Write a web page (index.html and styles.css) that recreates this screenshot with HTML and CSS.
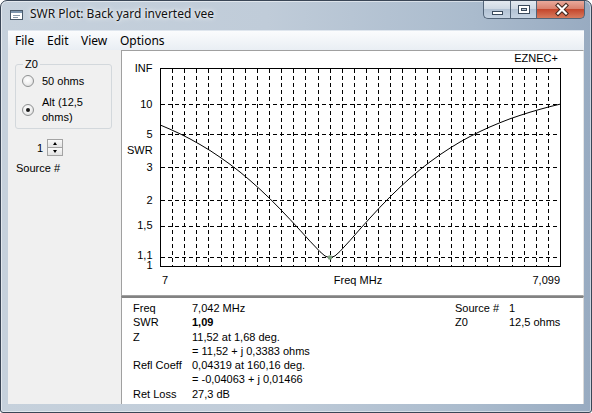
FILE: index.html
```html
<!DOCTYPE html>
<html>
<head>
<meta charset="utf-8">
<title>SWR Plot</title>
<link rel="stylesheet" href="styles.css">
</head>
<body>
<div class="window">
  <div class="titlebar">
    <svg class="app-icon" width="14" height="12" viewBox="0 0 14 12">
      <rect x="0.5" y="1.5" width="12" height="9" fill="#ffffff" stroke="#4a5a6a"/>
      <rect x="1" y="2" width="11" height="2" fill="#7d95ad"/>
      <path d="M3 6.5H10M3 8.5H8" stroke="#8a9aaa"/>
    </svg>
    <span class="title">SWR Plot: Back yard inverted vee</span>
    <div class="caption">
      <div class="cbtn cmin"><span class="glyph-min"></span></div>
      <div class="cbtn cmax"><span class="glyph-max"></span></div>
      <div class="cbtn cclose">
        <svg width="46" height="17" viewBox="0 0 46 17">
          <path d="M20 4.5L28 12.5M28 4.5L20 12.5" stroke="#40261e" stroke-width="4.2" stroke-linecap="square"/>
          <path d="M20 4.5L28 12.5M28 4.5L20 12.5" stroke="#ffffff" stroke-width="2.2" stroke-linecap="square"/>
        </svg>
      </div>
    </div>
  </div>
  <div class="menubar">
    <span>File</span><span>Edit</span><span>View</span><span>Options</span>
  </div>
  <div class="panes">
    <div class="left">
      <fieldset class="group">
        <legend>Z0</legend>
        <div class="radio r1"><span class="dot"></span><span>50 ohms</span></div>
        <div class="radio r2"><span class="dot on"></span><span>Alt (12,5<br>ohms)</span></div>
      </fieldset>
      <div class="spin">
        <span class="val">1</span>
        <div class="arrows"><span class="up"></span><span class="down"></span></div>
      </div>
      <div class="src">Source #</div>
    </div>
    <div class="right">
      <div class="plot">
        <svg class="chart" width="461" height="244" viewBox="122 51 461 244">
          <g class="grid">
            <path d="M172.5 69V266M184.5 69V266M196.5 69V266M208.5 69V266M221.5 69V266M233.5 69V266M245.5 69V266M257.5 69V266M269.5 69V266M281.5 69V266M293.5 69V266M305.5 69V266M318.5 69V266M330.5 69V266M342.5 69V266M354.5 69V266M366.5 69V266M378.5 69V266M390.5 69V266M402.5 69V266M415.5 69V266M427.5 69V266M439.5 69V266M451.5 69V266M463.5 69V266M475.5 69V266M487.5 69V266M499.5 69V266M512.5 69V266M524.5 69V266M536.5 69V266M548.5 69V266"/>
            <path d="M161 104.5H560M161 134.5H560M161 167.5H560M161 200.5H560M161 226.5H560M161 257.5H560"/>
          </g>
          <rect class="frame" x="160.5" y="68.5" width="400" height="198"/>
          <path class="curve" d="M160 124.9L170 129.2L180 133.8L190 138.9L200 144.5L210 150.5L220 157.2L230 164.3L240 172L250 180.4L260 189.3L270 198.8L280 208.9L290 219.4L300 230.2L310 241.2L320 251.7L325 256L330 257.9L335 255.9L340 251.4L350 240.5L360 229.1L370 218L380 207.2L390 196.9L400 187.2L410 178.1L420 169.7L430 161.9L440 154.7L450 148.1L460 142L470 136.5L480 131.5L490 126.9L500 122.7L510 118.8L520 115.4L530 112.2L540 109.3L550 106.6L560 104.2"/>
          <circle class="marker" cx="330" cy="257.5" r="2.3"/>
          <g class="axis">
            <text class="end" x="152.5" y="71.5">INF</text>
            <text class="end" x="152.5" y="107.5">10</text>
            <text class="end" x="152.5" y="137.5">5</text>
            <text x="127" y="153.5">SWR</text>
            <text class="end" x="152.5" y="170.5">3</text>
            <text class="end" x="152.5" y="203.5">2</text>
            <text class="end" x="152.5" y="229">1,5</text>
            <text class="end" x="152.5" y="259">1,1</text>
            <text class="end" x="152.5" y="269">1</text>
            <text x="162" y="284">7</text>
            <text class="mid" x="358" y="284">Freq MHz</text>
            <text class="end" x="560" y="284">7,099</text>
            <text class="end" x="558" y="61.5">EZNEC+</text>
          </g>
        </svg>
      </div>
      <div class="info">
        <div class="tbl tbl-left">
          <span>Freq</span><span>7,042 MHz</span>
          <span>SWR</span><span class="b">1,09</span>
          <span>Z</span><span>11,52 at 1,68 deg.</span>
          <span></span><span>= 11,52 + j 0,3383 ohms</span>
          <span>Refl Coeff</span><span>0,04319 at 160,16 deg.</span>
          <span></span><span>= -0,04063 + j 0,01466</span>
          <span>Ret Loss</span><span>27,3 dB</span>
        </div>
        <div class="tbl tbl-right">
          <span>Source #</span><span>1</span>
          <span>Z0</span><span>12,5 ohms</span>
        </div>
      </div>
    </div>
  </div>
</div>
</body>
</html>
```
FILE: styles.css
```css
* { box-sizing: border-box; }
html, body { margin: 0; padding: 0; }
body {
  width: 592px;
  height: 413px;
  overflow: hidden;
  background: #ffffff;
}
.window {
  width: 592px;
  height: 413px;
  display: flex;
  flex-direction: column;
  padding: 0 7px 8px;
  border: 1px solid #3a4656;
  border-radius: 7px 7px 3px 3px;
  background: linear-gradient(to right, #c6d1dc 0%, #c0ccd9 45%, #aabbcd 80%, #98abc1 100%);
  box-shadow: inset 0 0 0 1px rgba(255,255,255,0.5);
}
.titlebar {
  height: 29px;
  flex: none;
  display: flex;
  align-items: flex-start;
}
.app-icon { margin: 8px 0 0 2px; flex: none; }
.title {
  margin: 5px 0 0 6px;
  font: 12px/16px "Noto Sans", "Open Sans", sans-serif;
  color: #111111;
  text-shadow: 0 0 6px rgba(255,255,255,0.95), 0 0 3px rgba(255,255,255,0.9);
}
.caption {
  margin-left: auto;
  margin-right: -1px;
  display: flex;
  height: 18px;
}
.cbtn {
  height: 18px;
  border: 1px solid #526478;
  border-top: none;
  display: flex;
  align-items: center;
  justify-content: center;
}
.cmin {
  width: 27px;
  border-radius: 0 0 0 5px;
  border-right: none;
  background: linear-gradient(#e3e9f0 0%, #cfd9e4 45%, #b2c2d4 50%, #c5d3e2 100%);
}
.cmax {
  width: 27px;
  background: linear-gradient(#e3e9f0 0%, #cfd9e4 45%, #b2c2d4 50%, #c5d3e2 100%);
}
.cclose {
  width: 48px;
  border-left: none;
  border-radius: 0 0 5px 0;
  background: linear-gradient(#e9a99b 0%, #d9826f 45%, #c5472d 50%, #d77b5e 100%);
}
.cclose svg { display: block; }
.glyph-min {
  width: 11px;
  height: 4px;
  margin-top: 6px;
  background: #ffffff;
  border: 1px solid #3a4a5c;
}
.glyph-max {
  width: 12px;
  height: 9px;
  border: 1px solid #3a4a5c;
  background: #ffffff;
  position: relative;
}
.glyph-max::after {
  content: "";
  position: absolute;
  left: 2px; top: 2px; right: 2px; bottom: 2px;
  border: 1px solid #3a4a5c;
  background: #b9c7d6;
}
.menubar {
  height: 20px;
  flex: none;
  display: grid;
  grid-template-columns: 32px 34px 39px auto;
  align-items: center;
  padding-left: 7px;
  font: 12px/16px "Noto Sans", "Open Sans", sans-serif;
  color: #000000;
  background: linear-gradient(#fbfcfd, #e9eef4);
  border-top: 1px solid #dfe6ee;
}
.panes {
  flex: 1;
  min-height: 0;
  display: flex;
}
.left {
  width: 113px;
  flex: none;
  background: #f0f0f0;
  font: 11px "Liberation Sans", Arial, sans-serif;
  color: #000000;
}
.group {
  margin: 6px 0 0 7px;
  width: 97px;
  height: 73px;
  padding: 0;
  min-width: 0;
  border: 1px solid #d3d8dc;
  border-radius: 3px;
}
.group legend {
  margin-left: 7px;
  padding: 0 2px;
  line-height: 16px;
}
.radio {
  display: flex;
  align-items: center;
  margin-left: 6px;
}
.r1 { margin-top: 2px; line-height: 14px; }
.r2 { margin-top: 7px; line-height: 15px; }
.dot {
  width: 12px;
  height: 12px;
  flex: none;
  margin-right: 8px;
  border-radius: 50%;
  border: 1px solid #8f9192;
  background: radial-gradient(circle at 45% 40%, #ffffff 0%, #f2f2f2 45%, #d3d3d3 100%);
  position: relative;
}
.dot.on::after {
  content: "";
  position: absolute;
  left: 3px; top: 3px;
  width: 4px; height: 4px;
  border-radius: 50%;
  background: #1a1a1a;
}
.spin {
  display: flex;
  align-items: center;
  margin: 10px 0 0 29px;
  height: 17px;
}
.val { width: 10px; line-height: 14px; }
.arrows {
  width: 16px;
  height: 17px;
  display: flex;
  flex-direction: column;
}
.arrows span {
  flex: 1;
  border: 1px solid #a3a3a3;
  background: linear-gradient(#fafafa, #e3e3e3);
  display: flex;
  align-items: center;
  justify-content: center;
}
.arrows .down { border-top: none; }
.arrows .up::before {
  content: "";
  border-left: 2.5px solid transparent;
  border-right: 2.5px solid transparent;
  border-bottom: 3px solid #000000;
}
.arrows .down::before {
  content: "";
  border-left: 2.5px solid transparent;
  border-right: 2.5px solid transparent;
  border-top: 3px solid #000000;
}
.src {
  margin: 5px 0 0 8px;
  line-height: 14px;
}
.right {
  flex: 1;
  min-width: 0;
  display: flex;
  flex-direction: column;
}
.plot {
  height: 246px;
  flex: none;
  border: 1px solid #a0a0a0;
  border-right-color: #e6e6e6;
  background: #ffffff;
}
.chart { display: block; }
.grid path {
  fill: none;
  stroke: #000000;
  stroke-width: 1;
  stroke-dasharray: 4 3;
  shape-rendering: crispEdges;
}
.frame {
  fill: none;
  stroke: #000000;
  stroke-width: 1;
  shape-rendering: crispEdges;
}
.curve {
  fill: none;
  stroke: #000000;
  stroke-width: 1;
}
.marker { fill: #7a9c7a; }
.axis text {
  font-family: "Liberation Sans", Arial, sans-serif;
  font-size: 11px;
  fill: #000000;
}
.axis text.end { text-anchor: end; }
.axis text.mid { text-anchor: middle; }
.info {
  flex: 1;
  display: flex;
  padding: 3px 0 0 11px;
  border-top: 2px solid #828282;
  border-left: 1px solid #a0a0a0;
  border-right: 1px solid #dadada;
  background: #ffffff;
  font: 11px/14.3px "Liberation Sans", Arial, sans-serif;
  color: #000000;
}
.tbl {
  display: grid;
  align-content: start;
  white-space: nowrap;
}
.tbl-left { grid-template-columns: 59px 263px; }
.tbl-right { grid-template-columns: 54px auto; }
.b { font-weight: bold; }
```
